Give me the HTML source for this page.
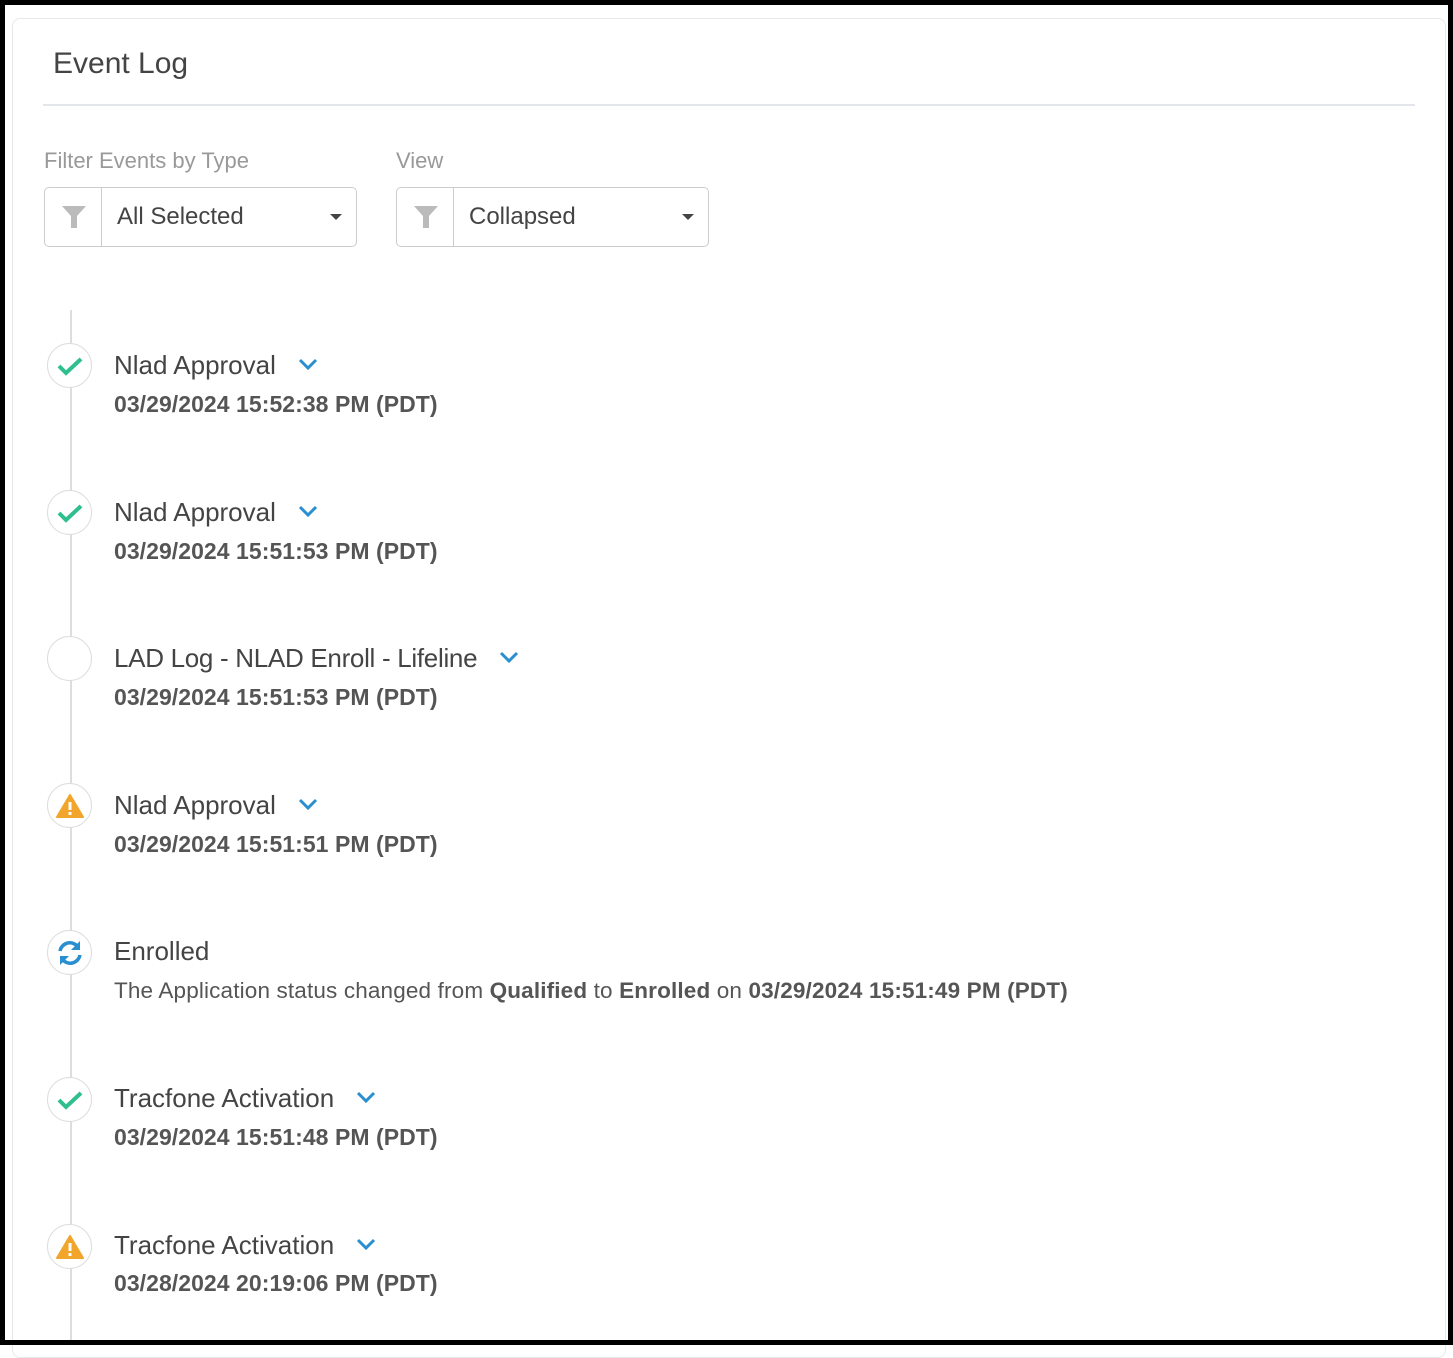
<!DOCTYPE html>
<html><head><style>
*{margin:0;padding:0;box-sizing:border-box}
body{width:1453px;height:1345px;background:#fff;position:relative;overflow:hidden;font-family:"Liberation Sans",sans-serif;color:#444}
.frame{position:absolute;left:0;top:0;width:1453px;height:1345px;border:5px solid #000}
.card{position:absolute;left:12px;top:18px;width:1434px;height:1340px;border:1px solid #e6e8ec;border-radius:8px}
.title{position:absolute;left:53px;top:47px;font-size:30px;color:#444}
.hr{position:absolute;left:43px;top:104px;width:1372px;height:2px;background:#e3e6ea}
.lbl{position:absolute;top:148px;font-size:22px;color:#999}
.sel{position:absolute;top:187px;width:313px;height:60px;border:1px solid #ccc;border-radius:5px}
.sel .ic{position:absolute;left:0;top:0;width:57px;height:58px;border-right:1px solid #ccc}
.sel .ic svg{position:absolute;left:16px;top:16px}
.sel .tx{position:absolute;left:72px;top:15px;font-size:24px;color:#444}
.sel .ar{position:absolute;right:14px;top:26px;width:0;height:0;border-left:6px solid transparent;border-right:6px solid transparent;border-top:6px solid #444}
.line{position:absolute;left:70px;top:310px;width:2px;height:1035px;background:#ddd}
.circ{position:absolute;left:47px;width:45px;height:45px;border:1.5px solid #ddd;border-radius:50%;background:#fff}
.circ svg{position:absolute;left:50%;top:50%;transform:translate(-50%,-50%)}
.h{position:absolute;left:114px;font-size:26px;color:#444;white-space:nowrap}
.h svg{margin-left:22px;vertical-align:middle;position:relative;top:-3px}
.d{position:absolute;left:114px;font-size:23px;font-weight:bold;color:#555;white-space:nowrap;letter-spacing:0.05px}
.p{position:absolute;left:114px;font-size:22.5px;color:#555;white-space:nowrap;letter-spacing:0.15px}
.p b{color:#555}
</style></head><body>
<div class="card"></div>
<div class="title">Event Log</div>
<div class="hr"></div>
<div class="lbl" style="left:44px">Filter Events by Type</div>
<div class="lbl" style="left:396px">View</div>
<div class="sel" style="left:44px"><div class="ic"><svg width="26" height="26" viewBox="0 0 26 26"><path d="M1 2h24l-9 10v12h-6V12z" fill="#bbb"/></svg></div><div class="tx">All Selected</div><div class="ar"></div></div>
<div class="sel" style="left:396px"><div class="ic"><svg width="26" height="26" viewBox="0 0 26 26"><path d="M1 2h24l-9 10v12h-6V12z" fill="#bbb"/></svg></div><div class="tx">Collapsed</div><div class="ar"></div></div>
<div class="line"></div>

<div class="circ" style="top:343px"><svg width="26" height="20" viewBox="0 0 26 20"><path d="M2 10l7 7L24 3" stroke="#2fbf8f" stroke-width="4" fill="none"/></svg></div>
<div class="h" style="top:350px">Nlad Approval<svg width="20" height="14" viewBox="0 0 20 14"><path d="M2 3l8 8 8-8" stroke="#2a8fd0" stroke-width="3" fill="none"/></svg></div>
<div class="d" style="top:391px">03/29/2024 15:52:38 PM (PDT)</div>

<div class="circ" style="top:490px"><svg width="26" height="20" viewBox="0 0 26 20"><path d="M2 10l7 7L24 3" stroke="#2fbf8f" stroke-width="4" fill="none"/></svg></div>
<div class="h" style="top:497px">Nlad Approval<svg width="20" height="14" viewBox="0 0 20 14"><path d="M2 3l8 8 8-8" stroke="#2a8fd0" stroke-width="3" fill="none"/></svg></div>
<div class="d" style="top:538px">03/29/2024 15:51:53 PM (PDT)</div>

<div class="circ" style="top:636px"></div>
<div class="h" style="top:643px;letter-spacing:-0.3px">LAD Log - NLAD Enroll - Lifeline<svg width="20" height="14" viewBox="0 0 20 14"><path d="M2 3l8 8 8-8" stroke="#2a8fd0" stroke-width="3" fill="none"/></svg></div>
<div class="d" style="top:684px">03/29/2024 15:51:53 PM (PDT)</div>

<div class="circ" style="top:783px"><svg width="28" height="26" viewBox="0 0 28 26"><path d="M14 2L27 24H1z" fill="#f2a52b" stroke="#f2a52b" stroke-width="2" stroke-linejoin="round"/><rect x="12.5" y="9" width="3" height="8" fill="#fff"/><rect x="12.5" y="19" width="3" height="3" fill="#fff"/></svg></div>
<div class="h" style="top:790px">Nlad Approval<svg width="20" height="14" viewBox="0 0 20 14"><path d="M2 3l8 8 8-8" stroke="#2a8fd0" stroke-width="3" fill="none"/></svg></div>
<div class="d" style="top:831px">03/29/2024 15:51:51 PM (PDT)</div>

<div class="circ" style="top:930px"><svg width="28" height="28" viewBox="0 0 28 28"><path d="M4 12A10 10 0 0 1 22 8" stroke="#2a8fd0" stroke-width="3.5" fill="none"/><path d="M24 2v9h-9z" fill="#2a8fd0"/><path d="M24 16A10 10 0 0 1 6 20" stroke="#2a8fd0" stroke-width="3.5" fill="none"/><path d="M4 26v-9h9z" fill="#2a8fd0"/></svg></div>
<div class="h" style="top:936px">Enrolled</div>
<div class="p" style="top:978px">The Application status changed from <b>Qualified</b> to <b>Enrolled</b> on <b>03/29/2024 15:51:49 PM (PDT)</b></div>

<div class="circ" style="top:1077px"><svg width="26" height="20" viewBox="0 0 26 20"><path d="M2 10l7 7L24 3" stroke="#2fbf8f" stroke-width="4" fill="none"/></svg></div>
<div class="h" style="top:1083px">Tracfone Activation<svg width="20" height="14" viewBox="0 0 20 14"><path d="M2 3l8 8 8-8" stroke="#2a8fd0" stroke-width="3" fill="none"/></svg></div>
<div class="d" style="top:1124px">03/29/2024 15:51:48 PM (PDT)</div>

<div class="circ" style="top:1224px"><svg width="28" height="26" viewBox="0 0 28 26"><path d="M14 2L27 24H1z" fill="#f2a52b" stroke="#f2a52b" stroke-width="2" stroke-linejoin="round"/><rect x="12.5" y="9" width="3" height="8" fill="#fff"/><rect x="12.5" y="19" width="3" height="3" fill="#fff"/></svg></div>
<div class="h" style="top:1230px">Tracfone Activation<svg width="20" height="14" viewBox="0 0 20 14"><path d="M2 3l8 8 8-8" stroke="#2a8fd0" stroke-width="3" fill="none"/></svg></div>
<div class="d" style="top:1270px">03/28/2024 20:19:06 PM (PDT)</div>
<div class="frame"></div>
</body></html>
